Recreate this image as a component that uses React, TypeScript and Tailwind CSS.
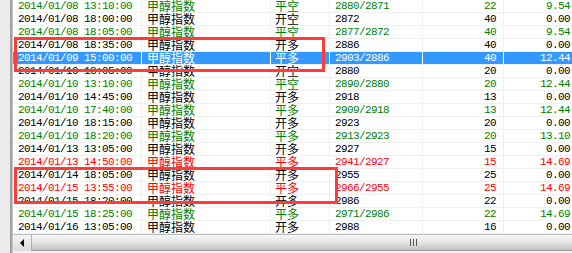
import React from "react";

type Row = { d: string; a: string; p: string; q: string; v: string; c: "g" | "k" | "r" | "s" };

const rows: Row[] = [
  { d: "2014/01/08 13:10:00", a: "平空", p: "2880/2871", q: "22", v: "9.54", c: "g" },
  { d: "2014/01/08 18:00:00", a: "开空", p: "2872", q: "40", v: "0.00", c: "k" },
  { d: "2014/01/08 18:05:00", a: "平空", p: "2877/2872", q: "40", v: "9.54", c: "g" },
  { d: "2014/01/08 18:35:00", a: "开多", p: "2886", q: "40", v: "0.00", c: "k" },
  { d: "2014/01/09 15:00:00", a: "平多", p: "2903/2886", q: "40", v: "12.44", c: "s" },
  { d: "2014/01/10 13:05:00", a: "开空", p: "2880", q: "20", v: "0.00", c: "k" },
  { d: "2014/01/10 13:10:00", a: "平空", p: "2890/2880", q: "20", v: "12.44", c: "g" },
  { d: "2014/01/10 14:45:00", a: "开多", p: "2918", q: "13", v: "0.00", c: "k" },
  { d: "2014/01/10 17:40:00", a: "平多", p: "2909/2918", q: "13", v: "12.44", c: "g" },
  { d: "2014/01/10 18:15:00", a: "开多", p: "2923", q: "20", v: "0.00", c: "k" },
  { d: "2014/01/10 18:20:00", a: "平多", p: "2913/2923", q: "20", v: "13.10", c: "g" },
  { d: "2014/01/13 13:05:00", a: "开多", p: "2927", q: "15", v: "0.00", c: "k" },
  { d: "2014/01/13 14:50:00", a: "平多", p: "2941/2927", q: "15", v: "14.69", c: "r" },
  { d: "2014/01/14 18:05:00", a: "开多", p: "2955", q: "25", v: "0.00", c: "k" },
  { d: "2014/01/15 13:55:00", a: "平多", p: "2966/2955", q: "25", v: "14.69", c: "r" },
  { d: "2014/01/15 18:20:00", a: "开多", p: "2986", q: "22", v: "0.00", c: "k" },
  { d: "2014/01/15 18:25:00", a: "平多", p: "2971/2986", q: "22", v: "14.69", c: "g" },
  { d: "2014/01/16 13:05:00", a: "开多", p: "2988", q: "16", v: "0.00", c: "k" },
];

const colorClass: Record<Row["c"], string> = {
  g: "text-[#008000] bg-white",
  k: "text-black bg-white",
  r: "text-[#ff0000] bg-white",
  s: "text-white bg-[#3399ff]",
};

const mono = { fontFamily: '"Liberation Mono", "Noto Sans CJK SC", monospace' };
const cjk = { fontFamily: '"Noto Sans CJK SC", "Liberation Sans", sans-serif' };

export default function App() {
  return (
    <div className="relative w-[572px] h-[253px] overflow-hidden bg-white flex">
      <div className="w-[10px] shrink-0 bg-[#ececec]" />
      <div className="w-[3px] shrink-0 bg-[#a0a0a0] border-r border-[#c8c8c8]" />
      <div className="flex flex-col shrink-0 w-[567px]">
        <div className="flex flex-col">
          {rows.map((r, i) => {
            const sep = r.c === "s" ? "border-white" : "border-[#f0f0f0]";
            return (
              <div key={i} className={`flex h-[13px] border-b border-[#f0f0f0] ${colorClass[r.c]}`}>
                <div
                  className={`w-[129px] shrink-0 border-r ${sep} pl-[5px] text-[11px] leading-[12px] tracking-[-0.6px] whitespace-nowrap`}
                  style={mono}
                >
                  {r.d}
                </div>
                <div className={`w-[129px] shrink-0 border-r ${sep} pl-[5px] text-[12px] leading-[12px] whitespace-nowrap`} style={cjk}>
                  甲醇指数
                </div>
                <div className={`w-[59px] shrink-0 border-r ${sep} pl-[4px] text-[12px] leading-[12px] whitespace-nowrap`} style={cjk}>
                  {r.a}
                </div>
                <div
                  className={`w-[93px] shrink-0 border-r ${sep} pl-[5px] text-[11px] leading-[12px] tracking-[-0.6px] whitespace-nowrap`}
                  style={mono}
                >
                  {r.p}
                </div>
                <div
                  className={`w-[81px] shrink-0 border-r ${sep} pr-[7px] text-right text-[11px] leading-[12px] tracking-[-0.6px] whitespace-nowrap`}
                  style={mono}
                >
                  {r.q}
                </div>
                <div
                  className="w-[76px] shrink-0 pr-[10px] text-right text-[11px] leading-[12px] tracking-[-0.6px] whitespace-nowrap"
                  style={mono}
                >
                  {r.v}
                </div>
              </div>
            );
          })}
        </div>
        <div className="flex h-[17px] border-t border-[#bdbdbd] bg-[#e8e8e8]">
          <div className="w-[18px] shrink-0 flex items-center justify-center bg-gradient-to-b from-[#f4f4f4] to-[#dcdcdc]">
            <div className="w-0 h-0 border-y-[4px] border-y-transparent border-r-[4px] border-r-black" />
          </div>
          <div className="flex-1 flex items-center bg-gradient-to-b from-[#f8f8f8] via-[#e4e4e4] to-[#c4c4c4] border-l border-[#b0b0b0] border-b border-b-[#9a9a9a]">
            <div className="ml-[378px] flex gap-[2px]">
              <div className="w-[1px] h-[7px] bg-[#555]" />
              <div className="w-[1px] h-[7px] bg-[#555]" />
              <div className="w-[1px] h-[7px] bg-[#555]" />
            </div>
          </div>
        </div>
        <div className="flex-1 bg-[#f4f4f4]" />
      </div>
      <div className="absolute left-[14px] top-[37px] w-[311px] h-[35px] border-[3px] border-[#ff3b3b]" />
      <div className="absolute left-[14px] top-[167px] w-[324px] h-[37px] border-[3px] border-[#ff3b3b]" />
    </div>
  );
}
